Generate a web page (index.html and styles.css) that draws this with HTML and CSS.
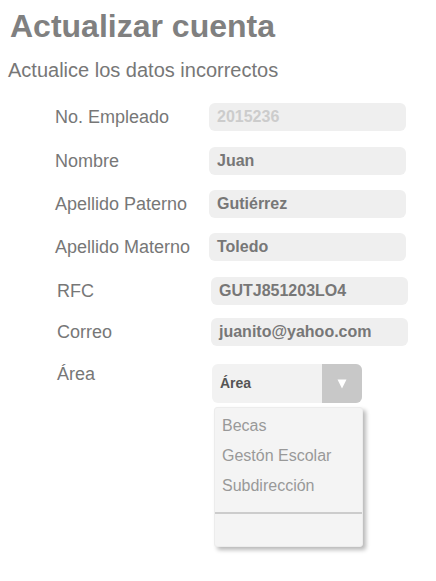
FILE: index.html
```html
<!DOCTYPE html>
<html lang="es">
<head>
<meta charset="utf-8">
<title>Actualizar cuenta</title>
<link rel="stylesheet" href="styles.css">
</head>
<body>
<header class="head">
  <h1 class="title">Actualizar cuenta</h1>
  <p class="subtitle">Actualice los datos incorrectos</p>
</header>
<form class="form">
  <div class="row row--wide">
    <label class="label">No. Empleado</label>
    <div class="input input--disabled">2015236</div>
  </div>
  <div class="row">
    <label class="label">Nombre</label>
    <div class="input">Juan</div>
  </div>
  <div class="row">
    <label class="label">Apellido Paterno</label>
    <div class="input">Gutiérrez</div>
  </div>
  <div class="row row--wide">
    <label class="label">Apellido Materno</label>
    <div class="input">Toledo</div>
  </div>
  <div class="row row--shift">
    <label class="label">RFC</label>
    <div class="input">GUTJ851203LO4</div>
  </div>
  <div class="row row--shift">
    <label class="label">Correo</label>
    <div class="input">juanito@yahoo.com</div>
  </div>
  <div class="row row--area">
    <label class="label label--area">Área</label>
    <div class="select-wrap">
      <div class="select">
        <span class="select-text">Área</span>
        <span class="select-arrow">
          <svg width="10" height="10" viewBox="0 0 10 10"><polygon points="0.5,0.5 9.5,0.5 5,9.5" fill="#ffffff"/></svg>
        </span>
      </div>
      <ul class="menu">
        <li class="menu-item">Becas</li>
        <li class="menu-item">Gestón Escolar</li>
        <li class="menu-item">Subdirección</li>
        <li class="menu-divider"></li>
      </ul>
    </div>
  </div>
</form>
</body>
</html>
```

FILE: styles.css
```css
* { box-sizing: border-box; }
body {
  margin: 0;
  background: #ffffff;
  font-family: "Liberation Sans", Arial, sans-serif;
  color: #777777;
}
.head { padding: 8px 0 0 0; }
.title {
  margin: 0 0 0 10px;
  font-size: 32px;
  line-height: 37px;
  font-weight: bold;
  color: #808080;
}
.subtitle {
  margin: 14px 0 0 8px;
  font-size: 20px;
  line-height: 23px;
  color: #777777;
}
.form {
  padding: 21px 0 0 55px;
}
.row {
  display: flex;
  align-items: center;
  height: 28px;
  margin-bottom: 15px;
}
.row--wide { margin-bottom: 16px; }
.row--shift { padding-left: 2px; margin-bottom: 13px; }
.label {
  width: 154px;
  font-size: 18px;
  color: #777777;
}
.input {
  width: 197px;
  height: 28px;
  border-radius: 6px;
  background: #efefef;
  padding-left: 8px;
  font-size: 16px;
  font-weight: bold;
  line-height: 28px;
  color: #777777;
}
.input--disabled { color: #cccccc; }
.row--area {
  height: auto;
  align-items: flex-start;
  padding-left: 2px;
  margin-top: 18px;
}
.label--area {
  width: 155px;
  line-height: 21px;
}
.select-wrap {
  display: flex;
  flex-direction: column;
}
.select {
  display: flex;
  width: 150px;
  height: 39px;
  border-radius: 6px;
  background: #f2f2f2;
  overflow: hidden;
}
.select-text {
  flex: 1;
  padding-left: 8px;
  font-size: 14px;
  font-weight: bold;
  line-height: 39px;
  color: #555555;
}
.select-arrow {
  width: 40px;
  background: #c8c8c8;
  display: flex;
  align-items: center;
  justify-content: center;
}
.menu {
  list-style: none;
  margin: 4px 0 0 2px;
  padding: 3px 0 0 0;
  width: 149px;
  height: 140px;
  background: #f4f4f4;
  border: 1px solid #ececec;
  border-radius: 3px;
  box-shadow: 3px 3px 4px rgba(0, 0, 0, 0.28);
}
.menu-item {
  padding-left: 7px;
  height: 30px;
  line-height: 30px;
  font-size: 16px;
  color: #999999;
}
.menu-divider {
  margin-top: 11px;
  height: 2px;
  background: #cccccc;
}
```
